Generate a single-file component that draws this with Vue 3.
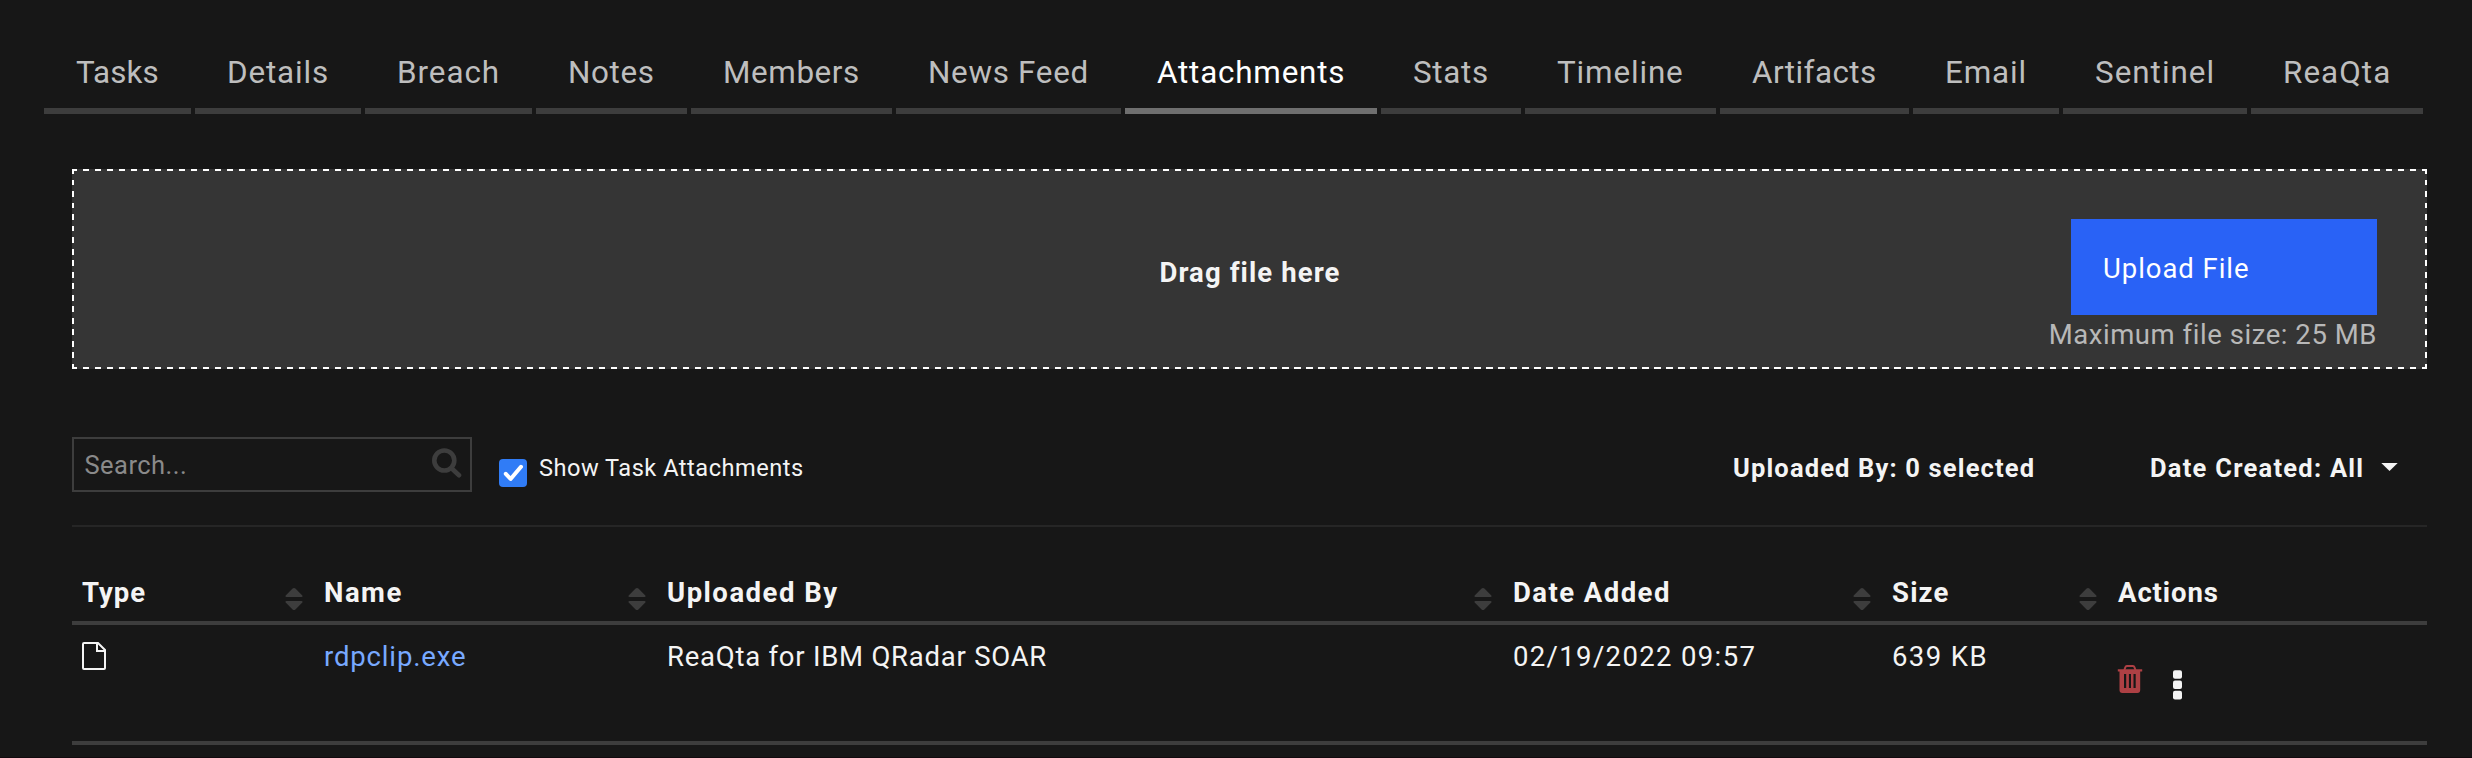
<script setup>
const tabs = [
  { label: 'Tasks', width: 147, spacing: 0.1 },
  { label: 'Details', width: 166, spacing: 0.85 },
  { label: 'Breach', width: 167, spacing: 0.95 },
  { label: 'Notes', width: 151, spacing: 0.65 },
  { label: 'Members', width: 201, spacing: 0.6 },
  { label: 'News Feed', width: 225, spacing: 0.7 },
  { label: 'Attachments', width: 252, spacing: 0.8, active: true },
  { label: 'Stats', width: 140, spacing: 0.7 },
  { label: 'Timeline', width: 191, spacing: 0.85 },
  { label: 'Artifacts', width: 189, spacing: 0.45 },
  { label: 'Email', width: 146, spacing: 0.85 },
  { label: 'Sentinel', width: 184, spacing: 1 },
  { label: 'ReaQta', width: 172, spacing: 1.05 },
]
const columns = [
  { label: 'Type', spacing: 1, sortable: true },
  { label: 'Name', spacing: 1.5, sortable: true },
  { label: 'Uploaded By', spacing: 1.5, sortable: true },
  { label: 'Date Added', spacing: 1.45, sortable: true },
  { label: 'Size', spacing: 1.2, sortable: true },
  { label: 'Actions', spacing: 0.9, sortable: false },
]
const files = [
  { name: 'rdpclip.exe', by: 'ReaQta for IBM QRadar SOAR', date: '02/19/2022 09:57', size: '639 KB' },
]
</script>

<template>
  <div class="page">
    <nav class="tabs">
      <a
        v-for="t in tabs"
        :key="t.label"
        class="tab"
        :class="{ active: t.active }"
        :style="{ width: t.width + 'px', letterSpacing: t.spacing + 'px' }"
      >{{ t.label }}</a>
    </nav>

    <main class="content">
      <section class="dropzone">
        <span></span>
        <strong class="drag">Drag file here</strong>
        <div class="upload">
          <button class="upload-btn">Upload File</button>
          <span class="hint">Maximum file size: 25 MB</span>
        </div>
      </section>

      <section class="toolbar">
        <div class="search">
          <span>Search...</span>
          <svg width="30" height="30" viewBox="0 0 30 30">
            <circle cx="12.3" cy="12.5" r="10" />
            <path d="M19.5 20.2L27 27.2" />
          </svg>
        </div>
        <label class="check">
          <svg width="28" height="28" viewBox="0 0 28 28">
            <rect width="28" height="28" rx="4" />
            <path d="M6.8 14.8L11.6 20L22 7.8" />
          </svg>
          <span>Show Task Attachments</span>
        </label>
        <div class="filters">
          <span class="by">Uploaded By: 0 selected</span>
          <span class="date">Date Created: All</span>
          <svg width="17" height="8" viewBox="0 0 17 8"><path d="M0.3 0H16.7L8.5 8Z" /></svg>
        </div>
      </section>

      <section class="table">
        <div class="row head">
          <div v-for="c in columns" :key="c.label" class="cell">
            <span :style="{ letterSpacing: c.spacing + 'px' }">{{ c.label }}</span>
            <svg v-if="c.sortable" class="sort" width="18" height="22" viewBox="0 0 18 22">
              <path d="M7.6 0.6Q9 -0.6 10.4 0.6L17.3 7.4Q18 9 16.6 9H1.4Q0 9 0.7 7.4Z" />
              <path d="M7.6 21.4Q9 22.6 10.4 21.4L17.3 14.6Q18 13 16.6 13H1.4Q0 13 0.7 14.6Z" />
            </svg>
          </div>
        </div>
        <div v-for="f in files" :key="f.name" class="row body">
          <div class="cell">
            <svg class="file" width="24" height="28" viewBox="0 0 24 28">
              <path d="M1 2Q1 1 2 1H16L23 8V26Q23 27 22 27H2Q1 27 1 26Z" />
              <path d="M15 1V9H23" />
            </svg>
          </div>
          <div class="cell name">{{ f.name }}</div>
          <div class="cell by-user">{{ f.by }}</div>
          <div class="cell added">{{ f.date }}</div>
          <div class="cell size">{{ f.size }}</div>
          <div class="cell actions">
            <svg class="trash" width="26" height="28" viewBox="0 0 26 28">
              <path d="M7.3 5L8.5 1.9Q8.8 1 9.8 1H16Q17 1 17.3 1.9L18.5 5" fill="none" stroke="#ad4044" stroke-width="2" />
              <path fill-rule="evenodd" fill="#ad4044" d="M0.8 4.3H25.2V6.6H23.2V25Q23.2 28 20.4 28H5.2Q2.5 28 2.5 25V6.6H0.8ZM7 9V23H9.2V9ZM11.9 9V23H14V9ZM16.5 9V23H18.7V9Z" />
            </svg>
            <svg class="dots" width="9" height="30" viewBox="0 0 9 30">
              <rect width="9" height="8.6" rx="2" y="0.2" />
              <rect width="9" height="8.6" rx="2" y="10.5" />
              <rect width="9" height="8.6" rx="2" y="20.8" />
            </svg>
          </div>
        </div>
      </section>
    </main>
    <div class="edge"></div>
  </div>
</template>

<style>
body {
  background: #171717;
}
</style>

<style scoped>
.page {
  box-sizing: border-box;
  width: 2472px;
  height: 758px;
  overflow: hidden;
  display: flex;
  flex-direction: column;
  background: #171717;
  color: #f4f4f4;
  font-family: Roboto, sans-serif;
}
.tabs {
  display: flex;
  gap: 4px;
  padding: 52px 0 0 44px;
}
.tab {
  box-sizing: border-box;
  padding: 1px 0 15px 32px;
  border-bottom: 6px solid #3d3d3d;
  font-size: 31.4px;
  line-height: 40px;
  white-space: nowrap;
  color: #bebebe;
}
.tab.active {
  color: #fff;
  border-color: #6f6f6f;
}
.content {
  flex: 1;
  margin: 55px 45px 0 72px;
}
.dropzone {
  --dash-x: repeating-linear-gradient(90deg, #fff 0 6.3px, transparent 6.3px 11.995px);
  --dash-y: repeating-linear-gradient(180deg, #fff 0 5.8px, transparent 5.8px 11.53px);
  box-sizing: border-box;
  height: 200px;
  display: grid;
  grid-template-columns: 1fr auto 1fr;
  padding: 2px;
  background:
    var(--dash-x) -1px 0 / 2400px 2px no-repeat,
    var(--dash-x) -1px 100% / 2400px 2px no-repeat,
    var(--dash-y) 0 -1px / 2px 240px no-repeat,
    var(--dash-y) 100% -1px / 2px 240px no-repeat,
    #353535;
}
.drag {
  align-self: center;
  padding: 7px 0 0 1px;
  font-size: 27.5px;
  letter-spacing: 1.1px;
}
.upload {
  display: flex;
  flex-direction: column;
  align-items: flex-end;
  padding: 48px 48px 0 0;
}
.upload-btn {
  width: 306px;
  height: 96px;
  padding: 2px 0 0 32px;
  border: 0;
  background: #2962f6;
  color: #fff;
  font: 27.5px Roboto, sans-serif;
  letter-spacing: 0.95px;
  text-align: left;
}
.hint {
  color: #b8b8b8;
  font-size: 27.5px;
  line-height: 40px;
  letter-spacing: 0.55px;
}
.toolbar {
  box-sizing: border-box;
  height: 158px;
  padding-top: 68px;
  display: flex;
  align-items: flex-start;
  border-bottom: 2px solid #262626;
}
.search {
  box-sizing: border-box;
  width: 400px;
  height: 55px;
  padding: 0 9px 0 10.5px;
  display: flex;
  align-items: center;
  justify-content: space-between;
  border: 2px solid #3d3d3d;
  color: #8a8a8a;
  font-size: 25.5px;
  letter-spacing: 0.45px;
}
.search svg {
  margin: 0 -1px 3px 0;
  fill: none;
  stroke: #3d3d3d;
  stroke-width: 4.6;
  stroke-linecap: round;
}
.check {
  display: flex;
  margin-left: 27px;
  font-size: 23.6px;
  line-height: 40px;
  letter-spacing: 0.5px;
}
.check svg {
  margin: 22px 12px 0 0;
}
.check span {
  margin-top: 11px;
}
.check rect {
  fill: #307cf6;
}
.check path {
  fill: none;
  stroke: #fff;
  stroke-width: 4;
  stroke-linecap: round;
  stroke-linejoin: round;
}
.filters {
  display: flex;
  margin: 11px 29px 0 auto;
  font-size: 25.5px;
  font-weight: 700;
  line-height: 40px;
}
.by {
  width: 417px;
  letter-spacing: 1.15px;
}
.date {
  width: 231px;
  letter-spacing: 1.25px;
}
.filters svg {
  margin-top: 15px;
  fill: #f4f4f4;
}
.row {
  display: grid;
  grid-template-columns: 242px 343px 846px 379px 226px 1fr;
  border-bottom: 4px solid #3d3d3d;
  font-size: 27.5px;
  line-height: 40px;
}
.cell {
  display: flex;
  padding-left: 10px;
}
.head {
  height: 94px;
  font-weight: 700;
}
.head .cell {
  align-items: flex-end;
  justify-content: space-between;
  padding: 0 11px 8px 10px;
}
.sort {
  margin-bottom: 3px;
  fill: #3d3d3d;
}
.body {
  height: 116px;
}
.body .cell {
  padding-top: 12px;
}
.file {
  margin-top: 5px;
  fill: none;
  stroke: #f4f4f4;
  stroke-width: 2;
}
.name {
  color: #78a9ff;
  letter-spacing: 0.85px;
}
.by-user {
  letter-spacing: 0.76px;
}
.added {
  letter-spacing: 1.35px;
}
.size {
  letter-spacing: 1.4px;
}
.trash {
  margin: 28px 0 0 -1px;
}
.dots {
  margin: 33px 0 0 30px;
  fill: #f4f4f4;
}
.edge {
  height: 1px;
  background: #120a0e;
}
</style>
